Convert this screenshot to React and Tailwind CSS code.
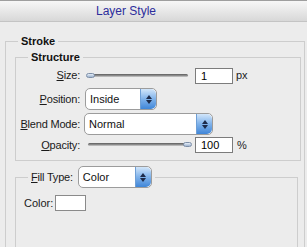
import React from 'react';

const Stepper = () => (
  <div className="flex h-full w-[16px] flex-col items-center justify-center gap-[1px] rounded-r-[5px] border-l border-[#6e9fd6] bg-gradient-to-b from-[#d2e6fa] via-[#7fb2ea] to-[#3f86d8]">
    <svg width="6" height="4" viewBox="0 0 6 4"><path d="M3 0 L6 4 L0 4 Z" fill="#1d2b4a" /></svg>
    <svg width="6" height="4" viewBox="0 0 6 4"><path d="M0 0 L6 0 L3 4 Z" fill="#1d2b4a" /></svg>
  </div>
);

const Select = ({ value, width }) => (
  <div className={`flex h-[22px] ${width} items-stretch overflow-hidden rounded-[5px] border border-[#9c9c9c] bg-white`}>
    <span className="flex-1 pl-[4px] leading-[21px] text-[11px] text-[#111]">{value}</span>
    <Stepper />
  </div>
);

const Slider = ({ thumbLeft }) => (
  <div className="relative h-[10px] w-[102px]">
    <div className="absolute left-[2px] right-0 top-[3px] h-[3px] rounded-full bg-gradient-to-b from-[#5c5c5c] via-[#8a8a8a] to-[#d0d0d0]" />
    <div
      className={`absolute top-[2px] h-[5px] w-[9px] rounded-full border border-[#7d8fa8] bg-gradient-to-b from-[#e6eef8] to-[#9fb4cf] ${thumbLeft ? 'left-0' : 'right-[-4px]'}`}
    />
  </div>
);

const Label = ({ first, rest }) => (
  <span className="w-[64px] text-right text-[11px] tracking-[-0.2px] text-[#1a1a1a]">
    <span className="underline">{first}</span>
    {rest}
  </span>
);

export default function App() {
  return (
    <div className="h-[247px] w-[307px] overflow-hidden bg-[#ececec] font-['Liberation_Sans',Arial,sans-serif]">
      <div className="h-[22px] border-t border-b border-t-[#9e9e9e] border-b-[#c4c4c4] bg-gradient-to-b from-[#f7f7f7] to-[#d8d8d8] pl-[96px] text-[12px] leading-[20px] text-[#2d2d9c]">
        Layer Style
      </div>

      <fieldset className="ml-[5px] mt-[13px] w-[300px] border border-[#cdcdcd] pb-[40px]">
        <legend className="ml-[12px] px-[3px] text-[11px] font-bold leading-[13px] text-[#111]">Stroke</legend>

        <fieldset className="ml-[9px] mt-[3px] w-[286px] border border-[#cdcdcd] pb-[7px]">
          <legend className="ml-[12px] px-[3px] text-[11px] font-bold leading-[13px] text-[#111]">Structure</legend>

          <div className="mt-[3px] flex h-[17px] items-center">
            <Label first="S" rest="ize:" />
            <div className="ml-[6px]"><Slider thumbLeft /></div>
            <div className="ml-[7px] h-[16px] w-[38px] border border-[#7c7c7c] bg-white pl-[5px] text-[11px] leading-[14px]">1</div>
            <span className="ml-[3px] text-[11px] text-[#222]">px</span>
          </div>

          <div className="mt-[4px] flex h-[22px] items-center">
            <Label first="P" rest="osition:" />
            <div className="ml-[5px]"><Select value="Inside" width="w-[72px]" /></div>
          </div>

          <div className="mt-[3px] flex h-[22px] items-center">
            <Label first="B" rest="lend Mode:" />
            <div className="ml-[4px]"><Select value="Normal" width="w-[129px]" /></div>
          </div>

          <div className="mt-[2px] flex h-[16px] items-center">
            <Label first="O" rest="pacity:" />
            <div className="ml-[6px]"><Slider /></div>
            <div className="ml-[7px] h-[16px] w-[38px] border border-[#7c7c7c] bg-white pl-[5px] text-[11px] leading-[14px]">100</div>
            <span className="ml-[4px] text-[11px] text-[#222]">%</span>
          </div>
        </fieldset>

        <fieldset className="ml-[9px] mt-[5px] w-[283px] border border-[#cdcdcd] pb-[40px]">
          <legend className="ml-[12px] flex items-center px-[3px]">
            <span className="text-[11px] tracking-[-0.2px] text-[#1a1a1a]"><span className="underline">F</span>ill Type:</span>
            <div className="ml-[5px]"><Select value="Color" width="w-[74px]" /></div>
          </legend>
          <div className="mt-[7px] flex items-center pl-[8px]">
            <span className="text-[11px] text-[#1a1a1a]">Color:</span>
            <div className="ml-[2px] h-[16px] w-[31px] border border-[#8a8a8a] bg-white" />
          </div>
        </fieldset>
      </fieldset>
    </div>
  );
}
